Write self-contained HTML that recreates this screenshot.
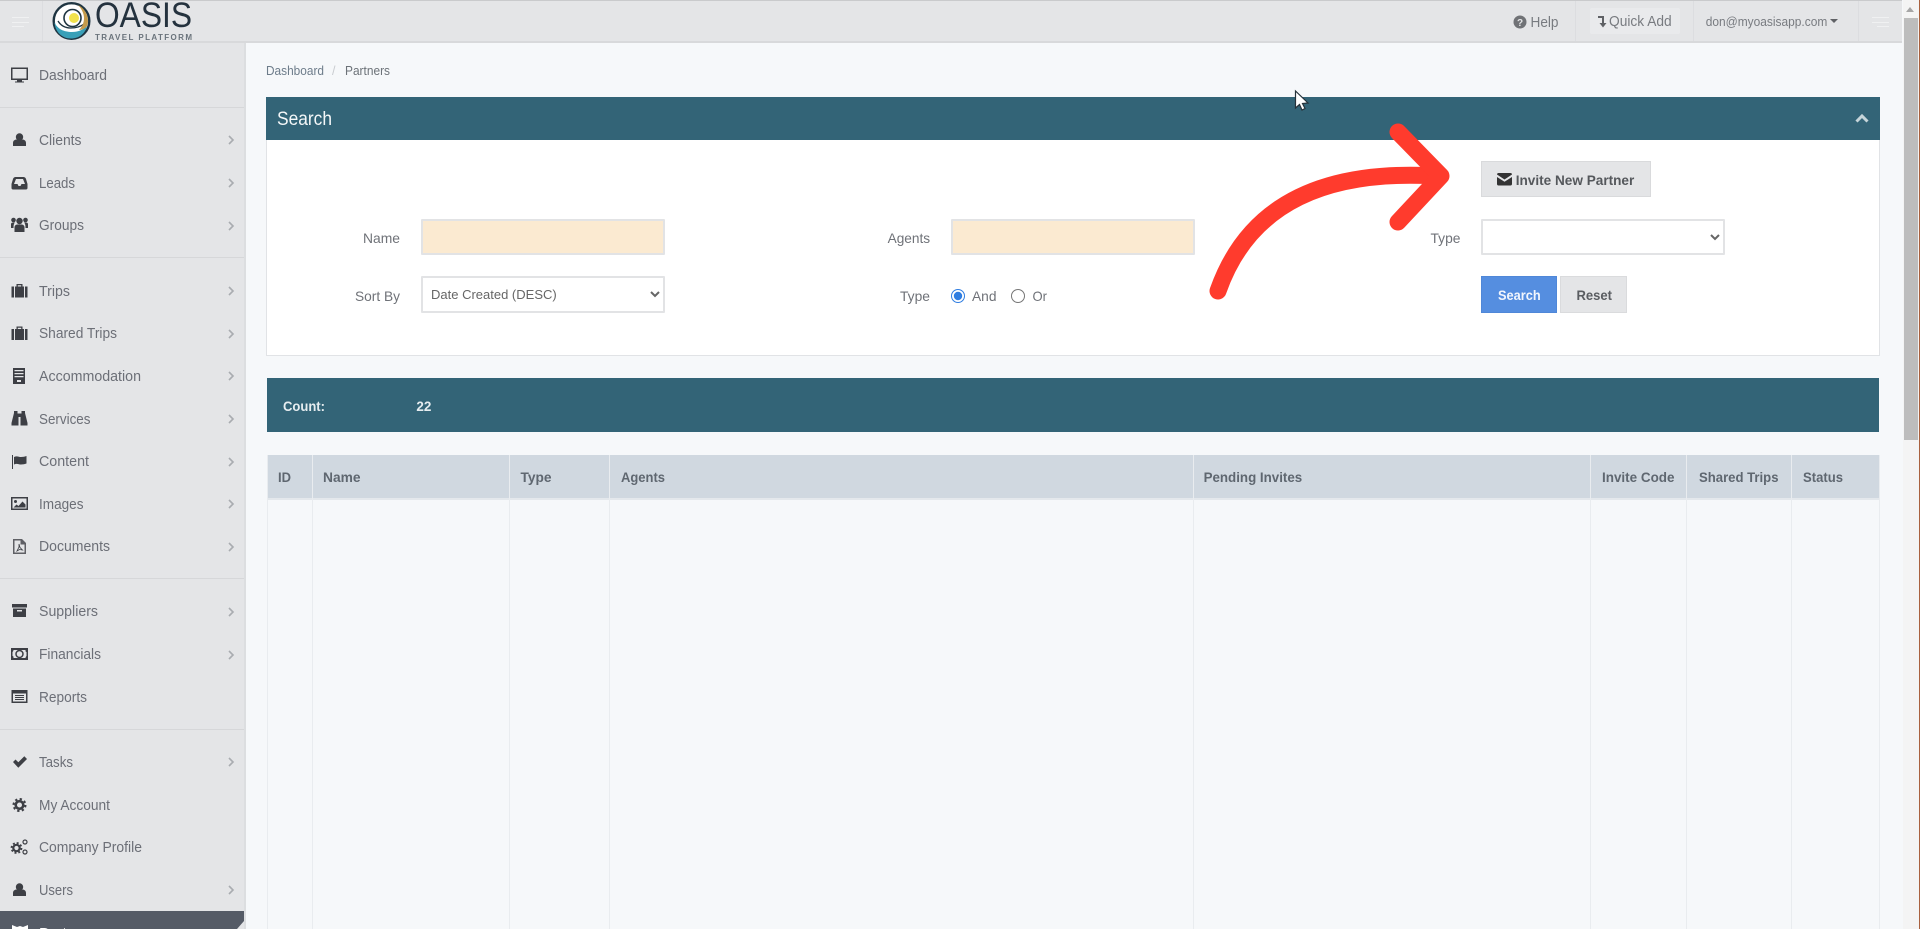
<!DOCTYPE html>
<html lang="en"><head><meta charset="utf-8"><title>Partners - Oasis Travel Platform</title>
<style>
html,body{margin:0;padding:0;width:1920px;height:929px;overflow:hidden;background:#f6f8fa;font-family:"Liberation Sans",sans-serif}
#stage{position:absolute;left:0;top:0;width:1920px;height:929px;overflow:hidden;filter:blur(.35px)}
svg{position:absolute;left:0;top:0}
input[type=text],select{position:absolute;box-sizing:border-box;height:36px;width:244px;border:2px solid #e2e3e5;border-radius:1px;margin:0;outline:0}
input[type=text]{background:#fbead1}
select{background:#fff;color:#666;font:13px "Liberation Sans",sans-serif;padding:0 0 0 4px}
input[type=radio]{position:absolute;margin:0;width:14px;height:14px;accent-color:#2f7de1}
text{font-family:"Liberation Sans",sans-serif}
.n{font-size:14.5px;fill:#6c6f77}
.l{font-size:14px;fill:#6f7278}
.h{font-size:14px;font-weight:bold;fill:#5f6770}
.c{fill:none;stroke:#a9acb0;stroke-width:1.6}
.i{fill:#3d3f45}
</style></head><body>
<div id="stage">
<svg width="1920" height="929" viewBox="0 0 1920 929" style="z-index:1">
<!-- backgrounds -->
<rect width="1920" height="929" fill="#f6f8fa"/>
<rect x="0" y="0" width="244" height="929" fill="#e4e5e7"/>
<rect x="244" y="42" width="2" height="887" fill="#dcdee0"/>
<rect x="0" y="0" width="1902" height="42" fill="#e4e5e7"/>
<rect x="0" y="0" width="1902" height="1" fill="#c9cacc"/>
<rect x="0" y="41" width="1902" height="2" fill="#d8d9db"/>
<rect x="42" y="1" width="1" height="40" fill="#dcdde0"/>
<rect x="1575" y="1" width="1" height="40" fill="#dcdde0"/>
<rect x="1693" y="1" width="1" height="40" fill="#dcdde0"/>
<rect x="1858" y="1" width="1" height="40" fill="#dcdde0"/>
<rect x="1590" y="8" width="90" height="26" rx="2" fill="#e9eaec"/>
<!-- hamburgers -->
<g fill="#f0f1f2"><rect x="12" y="17" width="17" height="1"/><rect x="12" y="22" width="17" height="1"/><rect x="12" y="26" width="12" height="1"/>
<rect x="1872" y="17" width="17" height="1"/><rect x="1872" y="22" width="17" height="1"/><rect x="1877" y="26" width="12" height="1"/></g>
<!-- scrollbar -->
<rect x="1903" y="0" width="17" height="929" fill="#f4f4f4"/>
<rect x="1904" y="18" width="14" height="422" fill="#bdbdbd"/>
<path d="M1906 12l4-5 4 5z" fill="#a6a6a6"/>
<rect x="1919" y="0" width="1" height="929" fill="#a9613f"/>
<!-- logo -->
<circle cx="71.500" cy="21" r="17.800" fill="#fff" stroke="#1f3542" stroke-width="2.400"/>
<path d="M54.500 22C57 29 64 32 72 32C78 32 83 30 87 26C85 34 79 38.500 71 38.500C62 38.500 55 32 54.500 22z" fill="#39a0b8"/>
<path d="M58 21C61 26 66 28 71 28C76 28 80 27 84 24" fill="none" stroke="#1f3542" stroke-width="1.300"/>
<path d="M78 5C84 8 88 14 88 21C88 24 87 27 85 28C84 29 81 30 79 30C82 27 84 23 84 18C84 13 81 8 78 5z" fill="#c39a4a"/>
<circle cx="72.500" cy="18" r="8.500" fill="#fff" stroke="#1f3542" stroke-width="1.600"/>
<circle cx="74" cy="18" r="5" fill="#f2e24d"/>
<text x="95" y="27" font-size="35" fill="#24323e" textLength="97" lengthAdjust="spacingAndGlyphs">OASIS</text>
<text x="95" y="40" font-size="8" font-weight="bold" fill="#6a737b" textLength="97" lengthAdjust="spacing">TRAVEL PLATFORM</text>
<!-- header right -->
<circle cx="1520" cy="22" r="6.500" fill="#707276"/>
<text x="1520" y="26" font-size="10" font-weight="bold" fill="#e4e5e7" text-anchor="middle">?</text>
<text x="1530.500" y="27" font-size="14.500" fill="#787b80" textLength="28" lengthAdjust="spacingAndGlyphs">Help</text>
<path d="M1598 16h6v7h2.500l-3.500 4.500-3.500-4.500h2.500v-5h-4z" fill="#5f6165"/>
<text x="1609" y="26" font-size="14.500" fill="#787b80" textLength="62.700" lengthAdjust="spacingAndGlyphs">Quick Add</text>
<text x="1705.700" y="26" font-size="13" fill="#787b80" textLength="121.600" lengthAdjust="spacingAndGlyphs">don@myoasisapp.com</text>
<path d="M1830 19h8l-4 4z" fill="#5f6165"/>
<!-- side dividers -->
<g fill="#d6d7d9"><rect x="0" y="107" width="244" height="1"/><rect x="0" y="257" width="244" height="1"/><rect x="0" y="578" width="244" height="1"/><rect x="0" y="729" width="244" height="1"/></g>
<!-- nav text -->
<text class="n" x="39" y="80" textLength="68" lengthAdjust="spacingAndGlyphs">Dashboard</text>
<text class="n" x="39" y="145" textLength="42.500" lengthAdjust="spacingAndGlyphs">Clients</text>
<text class="n" x="39" y="188" textLength="36" lengthAdjust="spacingAndGlyphs">Leads</text>
<text class="n" x="39" y="230" textLength="45" lengthAdjust="spacingAndGlyphs">Groups</text>
<text class="n" x="39" y="296" textLength="31" lengthAdjust="spacingAndGlyphs">Trips</text>
<text class="n" x="39" y="338" textLength="78" lengthAdjust="spacingAndGlyphs">Shared Trips</text>
<text class="n" x="39" y="381" textLength="102" lengthAdjust="spacingAndGlyphs">Accommodation</text>
<text class="n" x="39" y="424" textLength="51.500" lengthAdjust="spacingAndGlyphs">Services</text>
<text class="n" x="39" y="466" textLength="50" lengthAdjust="spacingAndGlyphs">Content</text>
<text class="n" x="39" y="509" textLength="44.500" lengthAdjust="spacingAndGlyphs">Images</text>
<text class="n" x="39" y="551" textLength="71" lengthAdjust="spacingAndGlyphs">Documents</text>
<text class="n" x="39" y="616" textLength="59" lengthAdjust="spacingAndGlyphs">Suppliers</text>
<text class="n" x="39" y="659" textLength="62" lengthAdjust="spacingAndGlyphs">Financials</text>
<text class="n" x="39" y="702" textLength="48" lengthAdjust="spacingAndGlyphs">Reports</text>
<text class="n" x="39" y="767" textLength="34" lengthAdjust="spacingAndGlyphs">Tasks</text>
<text class="n" x="39" y="810" textLength="71" lengthAdjust="spacingAndGlyphs">My Account</text>
<text class="n" x="39" y="852" textLength="103" lengthAdjust="spacingAndGlyphs">Company Profile</text>
<text class="n" x="39" y="895" textLength="34" lengthAdjust="spacingAndGlyphs">Users</text>
<path d="M0 911H244V921L237 929H0z" fill="#555b66"/>
<text x="39" y="938" font-size="14.500" fill="#fff" textLength="57" lengthAdjust="spacingAndGlyphs">Partners</text>
<path d="M12 925l5 2 3-1 3 1 5-2v4H12z" fill="#fff"/>
<!-- chevrons -->
<g class="c"><path d="M229 136l4 4-4 4"/><path d="M229 179l4 4-4 4"/><path d="M229 222l4 4-4 4"/><path d="M229 287l4 4-4 4"/><path d="M229 330l4 4-4 4"/><path d="M229 372l4 4-4 4"/><path d="M229 415l4 4-4 4"/><path d="M229 458l4 4-4 4"/><path d="M229 500l4 4-4 4"/><path d="M229 543l4 4-4 4"/><path d="M229 608l4 4-4 4"/><path d="M229 651l4 4-4 4"/><path d="M229 758l4 4-4 4"/><path d="M229 886l4 4-4 4"/></g>
<!-- nav icons -->
<g class="i">
<path d="M11 67.500h17v12.500H22v1.500h2v1h-9v-1h2V80H11zM12.500 69v9.500h14V69z" fill-rule="evenodd"/>
<circle cx="19.500" cy="137" r="3.700"/><path d="M13 146v-3c0-2.500 2-3.500 3.500-3.500 2 1.200 4 1.200 6 0 1.500 0 3.500 1 3.500 3.500v3z"/>
<path d="M15.500 177h8c1 0 2 .5 2.500 2l1.500 5v4c0 1-.7 1.500-1.500 1.500H13c-.8 0-1.500-.5-1.500-1.500v-4l1.500-5c.5-1.500 1.500-2 2.500-2zM16 179l-2 5h3.500l1 2h2l1-2h3.500l-2-5z" fill-rule="evenodd"/>
<circle cx="19.500" cy="221" r="3.200"/><circle cx="13.500" cy="220" r="2.300"/><circle cx="25.500" cy="220" r="2.300"/><path d="M14.500 232v-4.500c0-2 1.500-3 3-3h4c1.500 0 3 1 3 3v4.500z"/><path d="M11 228v-4c0-1 1-1.500 2-1.500h2c-1 1-1.500 2-1.500 5.500zM28 228v-4c0-1-1-1.500-2-1.500h-2c1 1 1.500 2 1.500 5.500z"/>
<path d="M11.500 286.500h2.500v11h-2.500zM15 286.500h9v11h-9zM25 286.500h2.500v11H25zM16.500 284h6v2.500h-1.300v-1.300h-3.400v1.300h-1.300z"/>
<path d="M11.500 329h2.500v11h-2.500zM15 329h9v11h-9zM25 329h2.500v11H25zM16.500 326.500h6v2.500h-1.300v-1.300h-3.400v1.300h-1.300z"/>
<path d="M13 368h12v16H13zM14.500 370v1.200h9V370zM14.500 373v1.200h9V373zM14.500 376v1.200h9V376zM17 380v2h4v-2z" fill-rule="evenodd"/>
<path d="M14 411h3.500v2.500h4V411H25v2l2.500 10v2.500h-7V417h-2v8.500h-7V423L14 413z"/>
<path d="M12 455h1v14h-1zM14 457c3-1.500 5 0 7 0s4-.5 5.500-1v7.500c-1.500.5-3.500 1-5.500 1s-4-1.500-7 0z"/>
<path d="M11 497h17v13H11zM12.500 498.500V508.500h14V498.500z" fill-rule="evenodd"/><circle cx="15.500" cy="501.500" r="1.500"/><path d="M13.500 507.500l3-3 2 1.500 4-4.500 3 3v3z"/>
<path d="M13 539h9l4 4v11H13zM14.500 540.500v12h10v-8h-4v-4z" fill-rule="evenodd" opacity=".8"/><path d="M19 544v3l-2 4 2.500-1.500 3 .5-2.500-2.500z" fill="none" stroke="#3d3f45" stroke-width=".8"/>
<path d="M12 604h15v3.500H12zM13 608.500h13v8.500H13zM17 610v1.500h5V610z" fill-rule="evenodd"/>
<path d="M11 648h17v12H11zM13.500 650c0 1-1 2-1 2v4c1 0 1 1 1 2h12c0-1 1-2 1-2v-4c-1 0-1-1-1-2z" fill-rule="evenodd"/><circle cx="19.500" cy="654" r="3.500" fill="none" stroke="#3d3f45" stroke-width="1.500"/>
<path d="M11.500 690h16v13h-16zM13 693.500v8h13v-8z" fill-rule="evenodd"/><path d="M15 695h9v1h-9zM15 697h9v1h-9zM15 699h9v1h-9z"/>
<path d="M13 762l2.500-2.500 2.800 2.800 6-6L27 759l-8.700 8.700z"/>
<circle cx="19.500" cy="805" r="3.800" fill="none" stroke="#3d3f45" stroke-width="2.600"/>
<circle cx="19.500" cy="805" r="6" fill="none" stroke="#3d3f45" stroke-width="2" stroke-dasharray="2.300 2.410"/>
<circle cx="16.500" cy="848" r="3.200" fill="none" stroke="#3d3f45" stroke-width="2.200"/>
<circle cx="16.500" cy="848" r="5" fill="none" stroke="#3d3f45" stroke-width="1.800" stroke-dasharray="2 1.930"/>
<circle cx="25" cy="842" r="2" fill="none" stroke="#3d3f45" stroke-width="1.200"/><circle cx="25" cy="852" r="2" fill="none" stroke="#3d3f45" stroke-width="1.200"/>
<circle cx="19.500" cy="887" r="3.700"/><path d="M13 896v-3c0-2.500 2-3.500 3.500-3.500 2 1.200 4 1.200 6 0 1.500 0 3.500 1 3.500 3.500v3z"/>
</g>
<!-- breadcrumb -->
<text x="266" y="75" font-size="12.500" fill="#6d7c8a" textLength="58" lengthAdjust="spacingAndGlyphs">Dashboard</text>
<text x="332" y="75" font-size="12.500" fill="#c9ccd0">/</text>
<text x="345" y="75" font-size="12.500" fill="#6c7278" textLength="45" lengthAdjust="spacingAndGlyphs">Partners</text>
<!-- search panel -->
<rect x="266.500" y="97.500" width="1613" height="258" fill="#fff" stroke="#e1e3e6"/>
<rect x="266" y="97" width="1614" height="43" fill="#336477"/>
<text x="277" y="125" font-size="19.500" fill="#f4f7f8" textLength="55" lengthAdjust="spacingAndGlyphs">Search</text>
<path d="M1856.500 121.500l5.500-5.500 5.500 5.500" fill="none" stroke="#c6d5da" stroke-width="3"/>
<!-- labels -->
<text class="l" x="363" y="243" textLength="37" lengthAdjust="spacingAndGlyphs">Name</text>
<text class="l" x="355" y="301" textLength="45" lengthAdjust="spacingAndGlyphs">Sort By</text>
<text class="l" x="887.600" y="243" textLength="42.500" lengthAdjust="spacingAndGlyphs">Agents</text>
<text class="l" x="900" y="301" textLength="30" lengthAdjust="spacingAndGlyphs">Type</text>
<text class="l" x="972" y="301" textLength="24.500" lengthAdjust="spacingAndGlyphs">And</text>
<text class="l" x="1032.500" y="301" textLength="14.500" lengthAdjust="spacingAndGlyphs">Or</text>
<text class="l" x="1430.500" y="243" textLength="30" lengthAdjust="spacingAndGlyphs">Type</text>
<!-- buttons -->
<rect x="1481.500" y="161.500" width="169" height="35" fill="#e4e5e7" stroke="#d9dadc"/>
<path d="M1497 174.500c0-1 .8-1.500 1.500-1.500h12c.8 0 1.500.5 1.500 1.500l-7.500 5zM1497 177l7.500 4.800 7.500-4.800v7c0 1-.7 1.500-1.500 1.500h-12c-.8 0-1.500-.5-1.500-1.500z" fill="#333"/>
<text x="1515.700" y="185" font-size="14" font-weight="bold" fill="#55585c" textLength="118.600" lengthAdjust="spacingAndGlyphs">Invite New Partner</text>
<rect x="1481.500" y="276.500" width="75" height="36" fill="#558ee0" stroke="#4f87d8"/>
<text x="1498" y="300" font-size="14" font-weight="bold" fill="#f2f6fd" textLength="42.700" lengthAdjust="spacingAndGlyphs">Search</text>
<rect x="1560.500" y="276.500" width="66" height="36" fill="#e4e5e7" stroke="#dadbdd"/>
<text x="1576.500" y="300" font-size="14" font-weight="bold" fill="#5a5d61" textLength="35.500" lengthAdjust="spacingAndGlyphs">Reset</text>
<!-- count bar -->
<rect x="267" y="378" width="1612" height="54" fill="#336477"/>
<text x="283" y="411" font-size="14" font-weight="bold" fill="#e6edf0" textLength="42" lengthAdjust="spacingAndGlyphs">Count:</text>
<text x="416.400" y="411" font-size="14" font-weight="bold" fill="#e6edf0" textLength="15" lengthAdjust="spacingAndGlyphs">22</text>
<!-- table -->
<rect x="267" y="455" width="1612" height="43" fill="#d0d8e0"/>
<rect x="267" y="498" width="1612" height="2" fill="#e4e8ec"/>
<g fill="#e9ecef"><rect x="267" y="455" width="1" height="474"/><rect x="312" y="455" width="1" height="474"/><rect x="509" y="455" width="1" height="474"/><rect x="609" y="455" width="1" height="474"/><rect x="1193" y="455" width="1" height="474"/><rect x="1590" y="455" width="1" height="474"/><rect x="1686" y="455" width="1" height="474"/><rect x="1791" y="455" width="1" height="474"/><rect x="1879" y="455" width="1" height="474"/></g>
<text class="h" x="278" y="482" textLength="13" lengthAdjust="spacingAndGlyphs">ID</text>
<text class="h" x="323" y="482" textLength="37.500" lengthAdjust="spacingAndGlyphs">Name</text>
<text class="h" x="520.500" y="482" textLength="31" lengthAdjust="spacingAndGlyphs">Type</text>
<text class="h" x="621" y="482" textLength="44" lengthAdjust="spacingAndGlyphs">Agents</text>
<text class="h" x="1203.600" y="482" textLength="98.600" lengthAdjust="spacingAndGlyphs">Pending Invites</text>
<text class="h" x="1602" y="482" textLength="72.500" lengthAdjust="spacingAndGlyphs">Invite Code</text>
<text class="h" x="1699" y="482" textLength="79.500" lengthAdjust="spacingAndGlyphs">Shared Trips</text>
<text class="h" x="1803" y="482" textLength="40" lengthAdjust="spacingAndGlyphs">Status</text>
</svg>
<input type="text" style="left:421px;top:219px;z-index:2">
<select style="left:421px;top:276px;height:37px;z-index:2"><option>Date Created (DESC)</option></select>
<input type="text" style="left:951px;top:219px;z-index:2">
<input type="radio" name="t" checked style="left:951px;top:289px;z-index:2">
<input type="radio" name="t" style="left:1011px;top:289px;z-index:2">
<select style="left:1481px;top:219px;z-index:2"><option></option></select>
<svg width="1920" height="929" viewBox="0 0 1920 929" style="z-index:3;pointer-events:none">
<!-- annotation arrow -->
<g fill="none" stroke="#ff3b2d" stroke-width="17" stroke-linecap="round" stroke-linejoin="round">
<path d="M1218 291C1250 200 1330 170 1435 176"/>
<path d="M1398 132L1441 176L1398 222"/>
</g>
<!-- cursor -->
<path d="M1295.500 91v17l4-3.500 2.500 5.500 3-1.500-2.500-5 5.500-.5z" fill="#fff" stroke="#26323a" stroke-width="1.200"/>
</svg>
</div>
</body></html>
